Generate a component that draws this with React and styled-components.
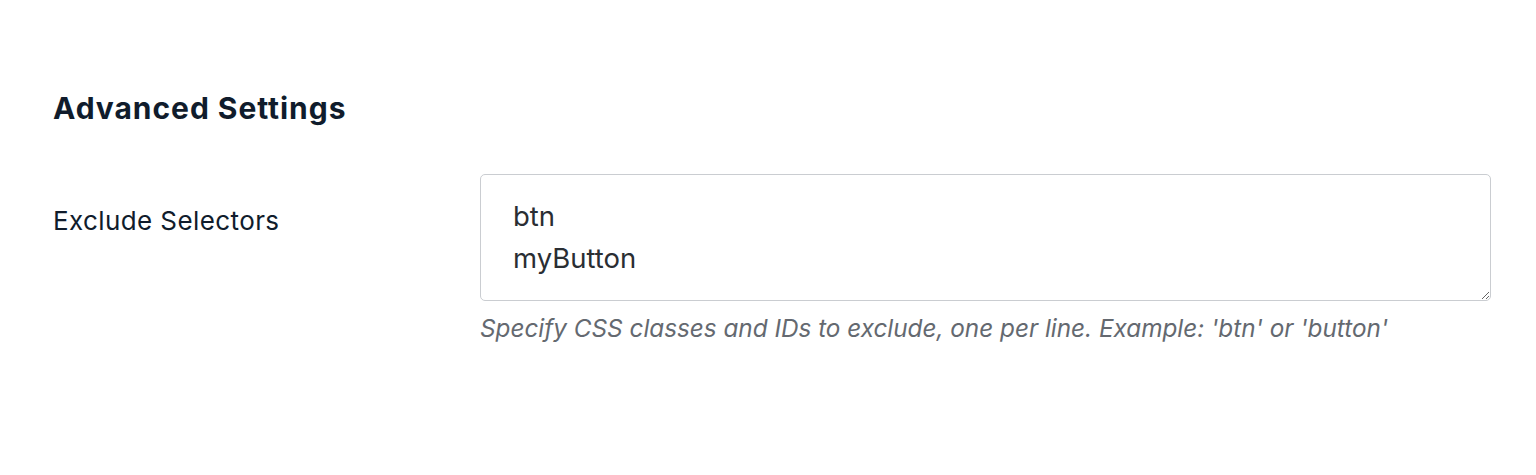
import React from "react";
import styled, { createGlobalStyle } from "styled-components";

const Global = createGlobalStyle`
  html, body { margin: 0; padding: 0; background: #ffffff; }
  body { font-family: Inter, "Noto Sans", sans-serif; -webkit-font-smoothing: antialiased; }
`;

const Page = styled.div`
  padding: 86px 45px 0 53px;
`;

const Heading = styled.h2`
  margin: 0 0 44px;
  font-size: 30px;
  line-height: 44px;
  font-weight: 700;
  color: #101c2c;
  letter-spacing: 0.95px;
`;

const Row = styled.div`
  display: grid;
  grid-template-columns: 427px 1fr;
  align-items: start;
`;

const Label = styled.label`
  padding-top: 31px;
  font-size: 26px;
  line-height: 32px;
  letter-spacing: 0.4px;
  color: #101c2c;
`;

const Field = styled.div`
  display: flex;
  flex-direction: column;
  gap: 11px;
`;

const TextArea = styled.textarea`
  box-sizing: border-box;
  width: 1011px;
  height: 127px;
  margin: 0;
  padding: 20px 32px;
  border: 1.5px solid #cacdd1;
  border-radius: 5px;
  background: #fff;
  font-family: Inter, "Noto Sans", sans-serif;
  font-size: 27.5px;
  line-height: 42px;
  color: #2a2e33;
  resize: vertical;
  outline: none;
  overflow: hidden;
`;

const Help = styled.p`
  margin: 0;
  font-size: 24.3px;
  line-height: 32px;
  font-style: italic;
  color: #646970;
`;

export default function App() {
  return (
    <>
      <Global />
      <Page>
        <Heading>Advanced Settings</Heading>
        <Row>
          <Label htmlFor="exclude">Exclude Selectors</Label>
          <Field>
            <TextArea id="exclude" defaultValue={"btn\nmyButton"} />
            <Help>Specify CSS classes and IDs to exclude, one per line. Example: 'btn' or 'button'</Help>
          </Field>
        </Row>
      </Page>
    </>
  );
}
